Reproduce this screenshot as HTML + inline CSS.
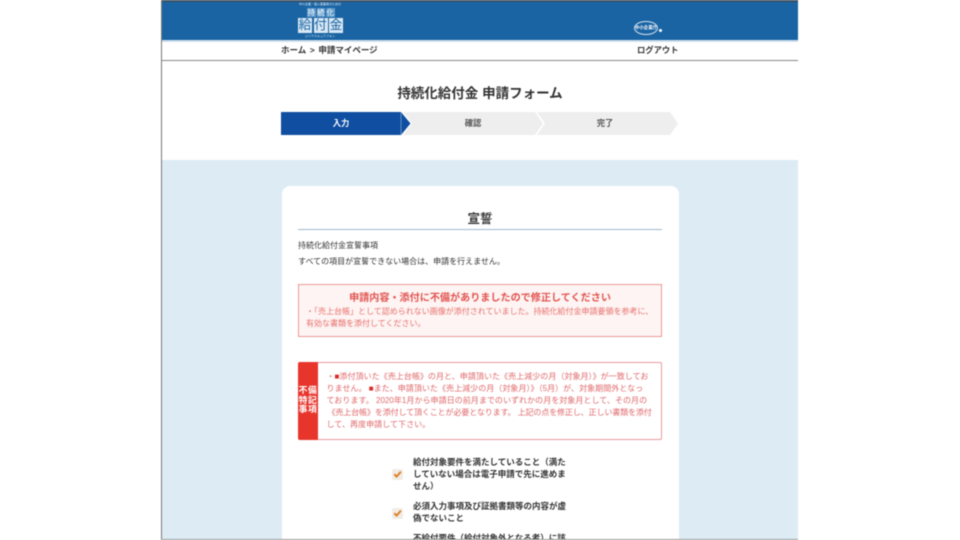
<!DOCTYPE html>
<html lang="ja">
<head>
<meta charset="utf-8">
<style>
html,body{margin:0;padding:0;width:960px;height:540px;overflow:hidden;background:#fff}
body{font-family:"Liberation Sans","Noto Sans CJK JP",sans-serif;color:#222;position:relative}
#p{position:absolute;left:0;top:0;width:960px;height:540px;overflow:hidden;filter:blur(.45px)}
.a{position:absolute;white-space:nowrap}
.c{text-align:center}
.b{font-weight:700}
</style>
</head>
<body>
<div id="p">
  <div class="a" style="left:161px;top:0;width:1px;height:540px;background:#777"></div>
  <div class="a" style="left:162px;top:0;width:636px;height:2px;background:#3b4f63"></div>
  <div class="a" style="left:162px;top:2px;width:636px;height:38px;background:#1a64a4"></div>
  <div class="a" style="left:162px;top:40px;width:636px;height:2px;background:#cfdfec"></div>

  <!-- logo -->
  <div class="a c" style="left:296px;top:2px;width:48px;font-size:3px;line-height:4px;color:#dcebf6">中小企業・個人事業者のための</div>
  <div class="a c" style="left:307px;top:8px;width:8.5px;height:9px;background:#5f9aca;color:#fff;font-size:7.5px;line-height:9px">持</div>
  <div class="a c" style="left:316.5px;top:8px;width:8.5px;height:9px;background:#5f9aca;color:#fff;font-size:7.5px;line-height:9px">続</div>
  <div class="a c" style="left:326px;top:8px;width:8.5px;height:9px;background:#5f9aca;color:#fff;font-size:7.5px;line-height:9px">化</div>
  <div class="a c" style="left:298px;top:18px;width:14px;height:15px;background:#d9e8f4;color:#1a64a4;font-size:12.5px;line-height:15px">給</div>
  <div class="a c" style="left:313.5px;top:18px;width:14px;height:15px;background:#d9e8f4;color:#1a64a4;font-size:12.5px;line-height:15px">付</div>
  <div class="a c" style="left:329px;top:18px;width:14px;height:15px;background:#d9e8f4;color:#1a64a4;font-size:12.5px;line-height:15px">金</div>
  <div class="a c" style="left:296px;top:33.5px;width:48px;font-size:3px;line-height:4px;color:#dcebf6">ジゾクカキュウフキン</div>

  <!-- right logo -->
  <div class="a c" style="left:634px;top:20.5px;width:24px;height:14px;box-sizing:border-box;border:1.2px solid #d5e4f0;border-radius:50%;color:#fff;font-size:4.4px;line-height:11.6px;font-weight:700">中小企業庁</div>
  <div class="a" style="left:659px;top:28.5px;width:3px;height:3px;border-radius:50%;background:#fff"></div>

  <!-- nav -->
  <div class="a b" style="left:281px;top:44.5px;font-size:8.5px;line-height:11px;color:#333;word-spacing:1.2px">ホーム &gt; 申請マイページ</div>
  <div class="a b" style="left:637px;top:44.5px;font-size:8.3px;line-height:11px;color:#333">ログアウト</div>
  <div class="a" style="left:162px;top:60px;width:636px;height:1px;background:#8a8a8a"></div>

  <!-- title -->
  <div class="a c b" style="left:280px;top:84px;width:400px;font-size:13.5px;line-height:18px;color:#333;padding-top:.5px">持続化給付金 申請フォーム</div>

  <!-- steps -->
  <svg class="a" style="left:281px;top:112px" width="400" height="23" viewBox="0 0 400 23">
    <path d="M122 0H254L262 11.5L254 23H122L131 11.5Z" fill="#eeeeee"/>
    <path d="M256 0H389L397 11.5L389 23H256L264 11.5Z" fill="#eeeeee"/>
    <path d="M0 0H120L129.5 11.5L120 23H0Z" fill="#0f4ea0"/>
    <path d="M120 0V23" fill="none" stroke="#5f8fc4" stroke-width="1"/>
    <text x="60" y="14" font-size="8.3" font-weight="700" fill="#fff" text-anchor="middle" font-family="Liberation Sans,Noto Sans CJK JP,sans-serif">入力</text>
    <text x="192" y="14" font-size="8.3" font-weight="700" fill="#555" text-anchor="middle" font-family="Liberation Sans,Noto Sans CJK JP,sans-serif">確認</text>
    <text x="324" y="14" font-size="8.3" font-weight="700" fill="#555" text-anchor="middle" font-family="Liberation Sans,Noto Sans CJK JP,sans-serif">完了</text>
  </svg>

  <!-- light blue area -->
  <div class="a" style="left:162px;top:160px;width:636px;height:380px;background:#ddebf5"></div>
  <div class="a" style="left:282px;top:186px;width:397px;height:370px;background:#fff;border-radius:8px"></div>

  <div class="a c b" style="left:298px;top:210.5px;width:364px;font-size:12.5px;line-height:17px;color:#333">宣誓</div>
  <div class="a" style="left:298px;top:229px;width:364px;height:1.4px;background:#9db8d2"></div>

  <div class="a" style="left:298px;top:240px;font-size:8px;line-height:11px;color:#333">持続化給付金宣誓事項</div>
  <div class="a" style="left:298px;top:256px;font-size:8px;line-height:11px;color:#333">すべての項目が宣誓できない場合は、申請を行えません。</div>

  <!-- error box -->
  <div class="a" style="left:298px;top:284px;width:364px;height:53px;box-sizing:border-box;background:#fdf4f3;border:1px solid #e89a98"></div>
  <div class="a c b" style="left:298px;top:292px;width:364px;font-size:10.1px;line-height:14px;color:#e2534f">申請内容・添付に不備がありましたので修正してください</div>
  <div class="a" style="left:306px;top:306px;font-size:8px;line-height:11.5px;color:#e8706c">・「売上台帳」として認められない画像が添付されていました。持続化給付金申請要領を参考に、<br>有効な書類を添付してください。</div>

  <!-- remarks box -->
  <div class="a" style="left:298px;top:362px;width:364px;height:78px;box-sizing:border-box;background:#fff;border:1px solid #e89a9e;border-radius:2px"></div>
  <div class="a" style="left:298px;top:362px;width:20px;height:78px;background:#e8352c;border-radius:2px 0 0 2px"></div>
  <div class="a c b" style="left:298px;top:386px;width:20px;font-size:8.8px;line-height:9.6px;letter-spacing:.6px;color:#fff">不備<br>特記<br>事項</div>
  <div class="a" style="left:326.5px;top:371px;font-size:8.05px;line-height:12px;color:#e0686b">・<span style="color:#d92b25">■</span>添付頂いた《売上台帳》の月と、申請頂いた《売上減少の月（対象月）》が一致してお<br>
りません。 <span style="color:#d92b25">■</span>また、申請頂いた《売上減少の月（対象月）》（5月）が、対象期間外となっ<br>
ております。 2020年1月から申請日の前月までのいずれかの月を対象月として、その月の<br>
<span style="letter-spacing:-.16px;margin-left:1px">《売上台帳》を添付して頂くことが必要となります。 上記の点を修正し、正しい書類を添付</span><br>
して、再度申請して下さい。</div>

  <!-- checks -->
  <div class="a" style="left:391.5px;top:468.5px;width:11px;height:11px;background:#f1ece6;border-radius:2px"></div>
  <svg class="a" style="left:391.5px;top:468px" width="11" height="12" viewBox="0 0 11 12"><path d="M2.3 6.2L4.6 8.6L8.9 3.6" fill="none" stroke="#dc7f22" stroke-width="1.9"/></svg>
  <div class="a" style="left:391.5px;top:507.5px;width:11px;height:11px;background:#f1ece6;border-radius:2px"></div>
  <svg class="a" style="left:391.5px;top:507px" width="11" height="12" viewBox="0 0 11 12"><path d="M2.3 6.2L4.6 8.6L8.9 3.6" fill="none" stroke="#dc7f22" stroke-width="1.9"/></svg>

  <div class="a b" style="left:413px;top:456px;font-size:8.5px;line-height:12px;color:#333">給付対象要件を満たしていること（満た<br>していない場合は電子申請で先に進めま<br>せん）</div>
  <div class="a b" style="left:413px;top:500px;font-size:8.5px;line-height:12px;color:#333">必須入力事項及び証拠書類等の内容が虚<br>偽でないこと</div>
  <div class="a b" style="left:413px;top:532px;font-size:8.5px;line-height:12px;color:#333">不給付要件（給付対象外となる者）に該</div>

  <div class="a" style="left:161px;top:539px;width:637px;height:1px;background:#999"></div>
</div>
</body>
</html>
